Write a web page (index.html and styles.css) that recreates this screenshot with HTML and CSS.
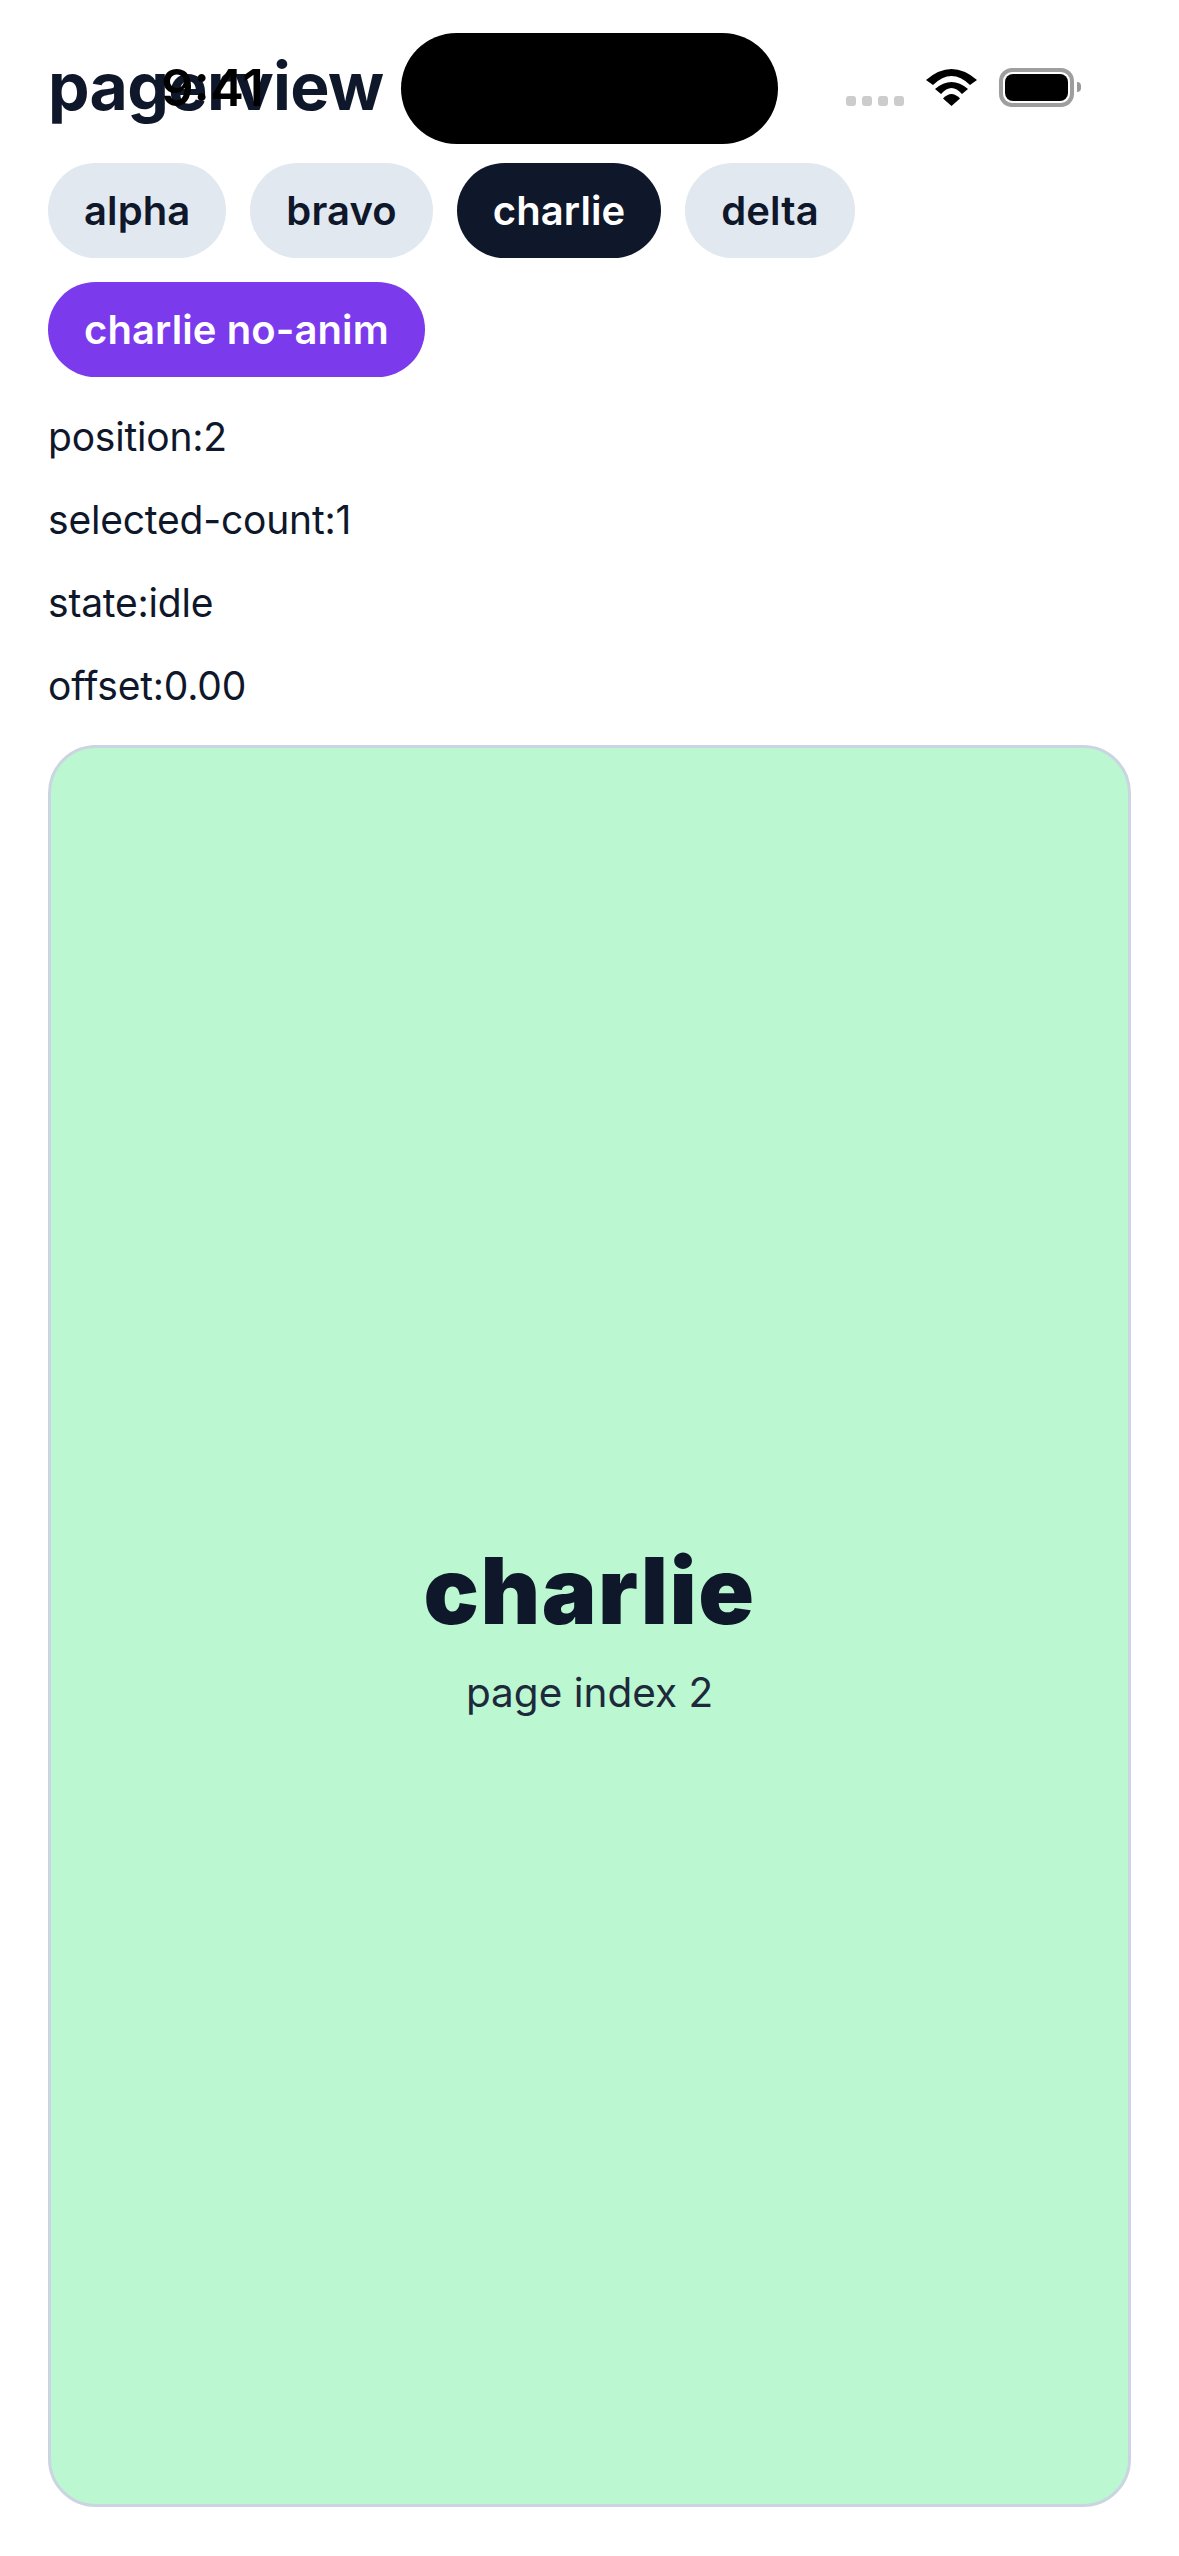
FILE: index.html
```html
<!DOCTYPE html>
<html lang="en">
<head>
<meta charset="utf-8">
<title>pagerview</title>
<link rel="stylesheet" href="styles.css">
</head>
<body>
<div class="status">
  <span class="time">9:41</span>
  <span class="island"></span>
  <span class="dots"><i></i><i></i><i></i><i></i></span>
  <svg class="wifi" viewBox="0 0 51 37"><path d="M0 11Q25.500 -11 51 11L44 16Q25.500 -2 7 16Z"/><path d="M9 20Q25.500 6 42 20L36 25Q25.500 13 15 25Z"/><path d="M17 29.500Q25.500 20.500 34 29.500L25.500 37Z"/></svg>
  <span class="battery"><span class="level"></span></span>
  <span class="nub"></span>
</div>
<main class="page">
  <h1 class="title">pagerview</h1>
  <div class="pills">
    <button class="pill">alpha</button>
    <button class="pill">bravo</button>
    <button class="pill active">charlie</button>
    <button class="pill">delta</button>
    <button class="pill purple">charlie no-anim</button>
  </div>
  <p class="stat">position:2</p>
  <p class="stat">selected-count:1</p>
  <p class="stat">state:idle</p>
  <p class="stat">offset:0.00</p>
  <section class="card">
    <h2 class="card-title">charlie</h2>
    <p class="card-sub">page index 2</p>
  </section>
</main>
</body>
</html>
```
FILE: styles.css
```css
* { box-sizing: border-box; }
html, body { margin: 0; padding: 0; background: #fff; }
body { width: 1179px; height: 2556px; overflow: hidden; font-family: Inter, "Liberation Sans", sans-serif; color: #0f172a; position: relative; }
.status { position: absolute; inset: 0 0 auto 0; height: 150px; }
.time { position: absolute; left: 161px; top: 55px; font-size: 51px; line-height: 66px; font-weight: 600; color: #000; }
.island { position: absolute; left: 401px; top: 33px; width: 377px; height: 111px; border-radius: 56px; background: #000; }
.dots { position: absolute; left: 846px; top: 96px; display: flex; gap: 6px; }
.dots i { width: 10px; height: 10px; border-radius: 3px; background: #ccc; }
.wifi { position: absolute; left: 926px; top: 69px; width: 51px; height: 37px; fill: #000; }
.battery { position: absolute; left: 999px; top: 68px; width: 75px; height: 39px; border: 4px solid #9e9e9e; border-radius: 13px; padding: 2px; }
.level { display: block; height: 100%; background: #000; border-radius: 8px; }
.nub { position: absolute; left: 1077px; top: 82px; width: 4px; height: 10px; background: #999; border-radius: 0 6px 6px 0; }
.page { padding: 53px 48px 0; display: flex; flex-direction: column; }
.title { margin: 0 0 43px; font-size: 66px; line-height: 67px; font-weight: 700; letter-spacing: -0.66px; color: #0f172a; }
.pills { display: flex; flex-wrap: wrap; gap: 24px; margin-bottom: 36px; }
.pill { border: 0; height: 95px; padding: 0 36px; border-radius: 48px; background: #e2e8f0; color: #0f172a; font: 600 40px Inter, sans-serif; letter-spacing: 0.1px; }
.pill.active { background: #0f172a; color: #fff; }
.pill.purple { background: #7c3aed; color: #fff; }
.stat { margin: 0 0 36px; font-size: 39px; line-height: 47px; letter-spacing: -0.2px; color: #0f172a; }
.card { height: 1762px; border: 3px solid #cbd5e1; border-radius: 48px; background: #bbf7d0; display: flex; flex-direction: column; align-items: center; justify-content: center; }
.card-title { margin: 0; font-size: 92px; line-height: 108px; font-weight: 900; letter-spacing: 1.5px; color: #0f172a; }
.card-sub { margin: 24px 0 0; font-size: 40.5px; line-height: 47px; color: #1e293b; }
```
